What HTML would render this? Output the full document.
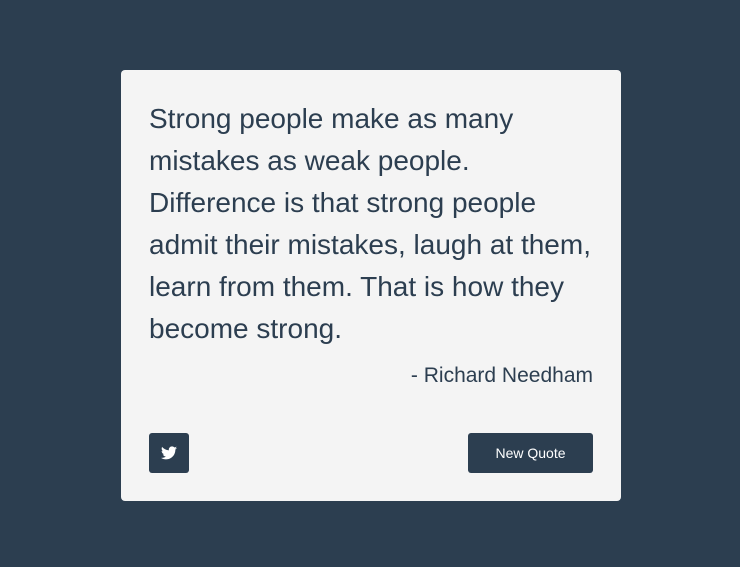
<!DOCTYPE html>
<html><head><style>
html,body{margin:0;padding:0;}
body{width:740px;height:567px;background:#2c3e50;position:relative;font-family:"Liberation Sans",Arial,sans-serif;overflow:hidden;}
.card{position:absolute;left:121px;top:70px;width:500px;height:431px;background:#f4f4f4;border-radius:4px;}
.q{position:absolute;left:28px;top:28px;white-space:nowrap;font-size:28px;line-height:42px;color:#2c3e50;margin:0;}
.a{position:absolute;right:28px;top:293px;font-size:21px;line-height:26px;color:#2c3e50;}
.tw{position:absolute;left:28px;top:363px;width:40px;height:40px;background:#2c3e50;border-radius:3px;}
.tw svg{position:absolute;left:12px;top:13px;}
.nq{position:absolute;left:347px;top:363px;width:125px;height:40px;background:#2c3e50;border-radius:3px;color:#fff;font-size:14px;line-height:40px;text-align:center;}
</style></head><body>
<div class="card">
<p class="q">Strong people make as many<br>mistakes as weak people.<br>Difference is that strong people<br>admit their mistakes, laugh at them,<br>learn from them. That is how they<br>become strong.</p>
<div class="a">- Richard Needham</div>
<div class="tw"><svg width="16" height="14" viewBox="0 0 24 20"><path fill="#fff" d="M24 2.4c-.9.4-1.8.6-2.8.8 1-.6 1.8-1.6 2.2-2.7-1 .6-2 1-3.1 1.2C19.3.7 18 0 16.6 0c-2.7 0-4.9 2.2-4.9 4.9 0 .4 0 .8.1 1.1C7.7 5.8 4.1 3.9 1.7.9c-.4.7-.7 1.6-.7 2.5 0 1.7.9 3.2 2.2 4.1-.8 0-1.6-.2-2.2-.6v.1c0 2.4 1.7 4.4 3.9 4.8-.4.1-.8.2-1.3.2-.3 0-.6 0-.9-.1.6 2 2.4 3.4 4.6 3.4-1.7 1.3-3.8 2.1-6.1 2.1-.4 0-.8 0-1.2-.1 2.2 1.4 4.8 2.2 7.5 2.2 9.1 0 14-7.5 14-14v-.6c1-.7 1.8-1.6 2.5-2.5z"/></svg></div>
<div class="nq">New Quote</div>
</div>
</body></html>
